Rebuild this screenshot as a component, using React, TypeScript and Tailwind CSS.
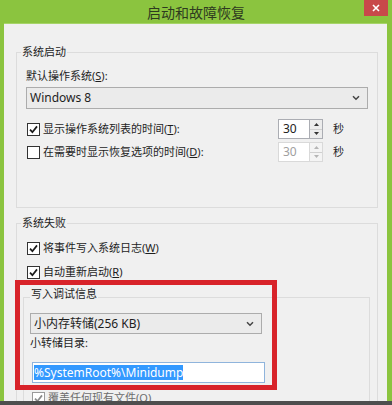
import React from "react";

function Check({ checked = false, dim = false }: { checked?: boolean; dim?: boolean }) {
  return (
    <span
      className={
        "w-[13px] h-[13px] border bg-white flex items-center justify-center shrink-0 " +
        (dim ? "border-[#9a9a9a]" : "border-[#333333]")
      }
    >
      {checked && (
        <svg width="9" height="9" viewBox="0 0 9 9">
          <path d="M1 4.6 L3.4 7.2 L8 1.4" stroke={dim ? "#8a8a8a" : "#1a1a1a"} strokeWidth="1.7" fill="none" />
        </svg>
      )}
    </span>
  );
}

function Chevron() {
  return (
    <svg width="8" height="6" viewBox="0 0 8 6">
      <path d="M1 1.2 L4 4.2 L7 1.2" stroke="#444" strokeWidth="1.5" fill="none" />
    </svg>
  );
}

function Spin({ disabled = false }: { disabled?: boolean }) {
  return (
    <div className="flex h-[20px] w-[45px]">
      <div
        className={
          "w-[32px] border bg-white text-[12px] pl-[4px] leading-[18px] " +
          (disabled ? "border-[#d9d9d9] text-[#a0a0a0]" : "border-[#abadb3] text-[#222]")
        }
      >
        30
      </div>
      <div
        className={
          "w-[13px] flex flex-col border-y border-r " +
          (disabled ? "border-[#d9d9d9] bg-[#f4f4f4]" : "border-[#abadb3] bg-[#ececec]")
        }
      >
        <div className="flex-1 flex items-center justify-center border-b border-[#d0d0d0]">
          <svg width="5" height="3" viewBox="0 0 5 3">
            <path d="M0 3 L2.5 0 L5 3 Z" fill={disabled ? "#b5b5b5" : "#333"} />
          </svg>
        </div>
        <div className="flex-1 flex items-center justify-center">
          <svg width="5" height="3" viewBox="0 0 5 3">
            <path d="M0 0 L2.5 3 L5 0 Z" fill={disabled ? "#b5b5b5" : "#333"} />
          </svg>
        </div>
      </div>
    </div>
  );
}

export default function App() {
  return (
    <div className="w-[392px] h-[405px] overflow-hidden relative bg-[#8bc43f] font-['Noto_Sans','Noto_Sans_CJK_SC',sans-serif] text-[#1e1e1e] text-[11px]">
      {/* title bar */}
      <div className="h-[23px] relative flex items-center justify-center">
        <span className="text-[14px] leading-[18px] text-[#2e3a1f] font-['Noto_Sans_CJK_SC',sans-serif]">启动和故障恢复</span>
        <div className="absolute top-0 right-[4px] w-[24px] h-[16px] bg-[#c8494a] flex items-center justify-center">
          <svg width="8" height="8" viewBox="0 0 8 8">
            <path d="M1 1 L7 7 M7 1 L1 7" stroke="#fff" strokeWidth="1.6" />
          </svg>
        </div>
      </div>
      <div className="h-[1px] bg-[#a6d468] ml-[4px] mr-[5px]" />

      {/* content */}
      <div className="ml-[4px] mr-[5px] h-[377px] bg-[#f0f0f0] overflow-hidden pt-[28px]">
        {/* group 1 */}
        <div className="relative ml-[12px] w-[362px] h-[156px] border border-[#dcdcdc]">
          <span className="absolute -top-[9px] left-[4px] px-[1px] bg-[#f0f0f0] leading-[16px]">系统启动</span>
          <div className="pt-[15px] pl-[9px]">
            <div className="leading-[16px]">
              默认操作系统(<span className="underline">S</span>):
            </div>
            <div className="mt-[3px] w-[342px] h-[22px] border border-[#acacac] bg-[#ebebeb] flex items-center pl-[3px] pr-[7px]">
              <span className="text-[12px] flex-1">Windows 8</span>
              <Chevron />
            </div>
            <div className="mt-[10px] h-[20px] flex items-center">
              <div className="w-[252px] flex items-center gap-[3px] pl-[1px]">
                <Check checked />
                <span className="leading-[16px]">
                  显示操作系统列表的时间(<span className="underline">T</span>):
                </span>
              </div>
              <Spin />
              <span className="ml-[10px] leading-[16px]">秒</span>
            </div>
            <div className="mt-[3px] h-[20px] flex items-center">
              <div className="w-[252px] flex items-center gap-[3px] pl-[1px]">
                <Check />
                <span className="leading-[16px]">
                  在需要时显示恢复选项的时间(<span className="underline">D</span>):
                </span>
              </div>
              <Spin disabled />
              <span className="ml-[10px] leading-[16px]">秒</span>
            </div>
          </div>
        </div>

        {/* group 2 */}
        <div className="relative mt-[15px] ml-[12px] w-[362px] h-[200px] border border-[#dcdcdc]">
          <span className="absolute -top-[9px] left-[4px] px-[1px] bg-[#f0f0f0] leading-[16px]">系统失败</span>
          <div className="pt-[16px] pl-[10px] flex flex-col gap-[8px]">
            <div className="flex items-center gap-[3px] h-[16px]">
              <Check checked />
              <span className="leading-[16px]">
                将事件写入系统日志(<span className="underline">W</span>)
              </span>
            </div>
            <div className="flex items-center gap-[3px] h-[16px]">
              <Check checked />
              <span className="leading-[16px]">
                自动重新启动(<span className="underline">R</span>)
              </span>
            </div>
          </div>
          {/* subgroup */}
          <div className="relative mt-[17px] ml-[6px] mr-[7px] h-[120px] border border-[#dcdcdc]">
            <span className="absolute -top-[12px] left-[6px] px-[1px] bg-[#f0f0f0] leading-[16px]">写入调试信息</span>
            <div className="pt-[15px] pl-[6px]">
              <div className="w-[232px] h-[21px] border border-[#acacac] bg-[#ebebeb] flex items-center pl-[3px] pr-[7px]">
                <span className="text-[12px] flex-1">小内存转储(256 KB)</span>
                <Chevron />
              </div>
              <div className="mt-[1px] leading-[16px]">小转储目录:</div>
              <div className="mt-[11px] ml-[2px] w-[233px] h-[21px] border border-[#8fb4dc] bg-white flex items-center pl-[1px]">
                <span className="text-[12px] leading-[15px] bg-[#3399ff] text-white">%SystemRoot%\Minidump</span>
              </div>
              <div className="mt-[7px] ml-[2px] flex items-center gap-[3px] h-[16px] text-[#6d6d6d]">
                <Check checked dim />
                <span className="leading-[16px]">覆盖任何现有文件(O)</span>
              </div>
            </div>
          </div>
        </div>
      </div>
      <div className="h-[4px] bg-[#4e4e4e]" />

      {/* red annotation rectangle */}
      <div className="absolute left-[15px] top-[280px] w-[262px] h-[110px] border-[5px] border-[#d8232a]" />
    </div>
  );
}
